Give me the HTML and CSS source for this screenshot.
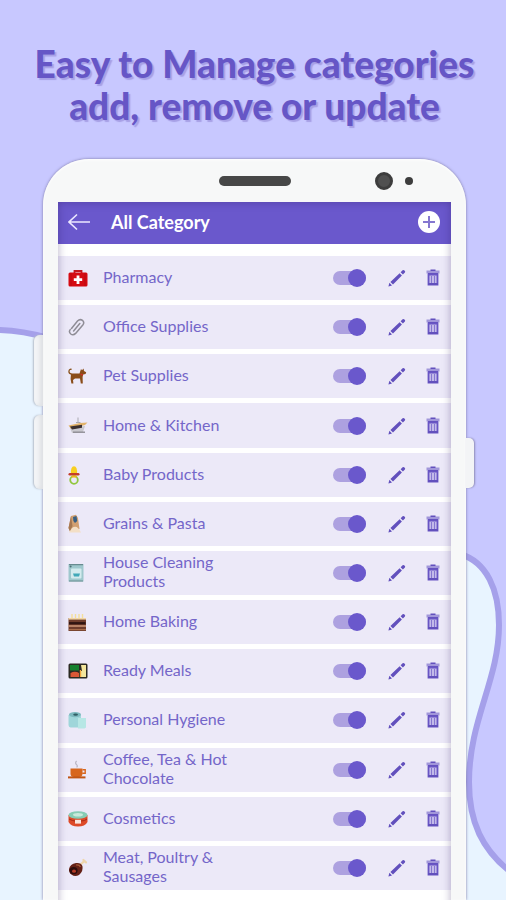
FILE: index.html
```html
<!DOCTYPE html>
<html lang="en">
<head>
    <meta charset="UTF-8">
    <meta name="viewport" content="width=device-width, initial-scale=1.0">
    <title>All Category</title>
    <link rel="stylesheet" href="styles.css">
</head>
<body>
    <!-- Wavy background -->
    <svg class="backdrop" viewBox="0 0 506 900" preserveAspectRatio="none" aria-hidden="true">
        <path d="M-6 330 Q20 330 48 338 L460 554 C487 562 499 590 499 625 C499 680 469 720 469 782 C469 822 482 850 512 873 V910 H-6 Z" fill="#e8f4ff" stroke="#a5a0ea" stroke-width="6"/>
    </svg>

    <!-- Shared icons -->
    <svg class="sprite" aria-hidden="true">
        <symbol id="pencil" viewBox="0 0 20 20">
            <path d="M1.4 18.4 L2.4 14.8 L5 17.4 Z M3.4 14 L12.6 5.2 L14.9 7.5 L6 16.6 Z M13.6 4.2 L15.6 2.2 Q16.4 1.6 17.1 2.3 L17.9 3.1 Q18.5 3.9 17.9 4.6 L15.9 6.5 Z" fill="#6250bd"/>
        </symbol>
        <symbol id="trash" viewBox="0 0 16 20">
            <path d="M1.5 2.5 H14.5 V5.5 H1.5 Z" fill="#a196da"/>
            <path d="M5.5 1.5 H10.5 V3 H5.5 Z M3 5 H13 V6.5 H3 Z" fill="#6250bd"/>
            <path d="M3.5 6.5 H12.5 V16.5 H3.5 Z" fill="#c3baea" stroke="#6855c4" stroke-width="1.8"/>
            <path d="M6.5 8 V15 M9.5 8 V15" stroke="#8577d0" stroke-width="1"/>
            <path d="M3 16 H13" stroke="#6250bd" stroke-width="2"/>
        </symbol>
    </svg>

    <h1 class="headline">Easy to Manage categories<br>add, remove or update</h1>

    <div class="phone">
        <div class="bezel">
            <span class="speaker"></span>
            <div class="sensors">
                <span class="camera"></span>
                <span class="sensor"></span>
            </div>
        </div>
        <main class="screen">
            <header class="app-bar">
                <button type="button" class="back-btn" aria-label="Back">
                    <svg width="22" height="18" viewBox="0 0 22 18"><path d="M22 9 H1 M9 1.5 L1 9 L9 16.5" fill="none" stroke="#ece8ff" stroke-width="1.6"/></svg>
                </button>
                <h2>All Category</h2>
                <button type="button" class="add-btn" aria-label="Add category">
                    <svg width="22" height="22" viewBox="0 0 22 22"><circle cx="11" cy="11" r="11" fill="#fff"/><path d="M11 5 V17 M5 11 H17" stroke="#8577d0" stroke-width="2"/></svg>
                </button>
            </header>
            <ul class="category-list">
                <li class="category">
                    <svg class="thumb" viewBox="0 0 20 20"><path d="M6.5 6 V3 H13.5 V6" fill="none" stroke="#c3161c" stroke-width="1.8"/><rect x="0.5" y="4.5" width="19" height="14" rx="1.5" fill="#d50b12"/><path d="M3 5 V18 M17 5 V18" stroke="#b50b12" stroke-width="0.8"/><path d="M10 7.5 V16 M5.8 11.7 H14.2" stroke="#fff" stroke-width="2.8"/></svg>
                    <label for="cat1">Pharmacy</label>
                    <input type="checkbox" id="cat1" class="toggle" checked>
                    <button type="button" aria-label="Edit Pharmacy"><svg class="pencil"><use href="#pencil"/></svg></button>
                    <button type="button" aria-label="Delete Pharmacy"><svg class="trash"><use href="#trash"/></svg></button>
                </li>
                <li class="category">
                    <svg class="thumb" viewBox="0 0 20 20"><path d="M3.5 11.5 L9.5 4 Q12 1.6 14.5 3.4 Q16.8 5.4 14.8 8 L7.6 16.4 Q5.2 18.8 2.8 17 Q0.4 15 2.2 12.6 M5.6 14 L11.8 6.6" fill="none" stroke="#8f8d96" stroke-width="1.5" stroke-linecap="round"/></svg>
                    <label for="cat2">Office Supplies</label>
                    <input type="checkbox" id="cat2" class="toggle" checked>
                    <button type="button" aria-label="Edit Office Supplies"><svg class="pencil"><use href="#pencil"/></svg></button>
                    <button type="button" aria-label="Delete Office Supplies"><svg class="trash"><use href="#trash"/></svg></button>
                </li>
                <li class="category">
                    <svg class="thumb" viewBox="0 0 20 20"><path d="M3.4 8 Q0.6 7.4 1 5 Q1.4 2.8 3.6 3.4" fill="none" stroke="#8a5420" stroke-width="1.3"/><path d="M3 7.5 H11.5 L13 3 L14 4.2 L15.6 2.6 L16 5 L18.2 6.2 L17.6 8 L15.2 8.4 L14.6 11 L14.8 17.5 H12.8 L12 12.4 H7 L5 14 L5.4 17.5 H3.4 L2.6 13 Z" fill="#8a4d1a"/><path d="M12.6 8 L15 9.2" stroke="#d92b2b" stroke-width="1.2"/></svg>
                    <label for="cat3">Pet Supplies</label>
                    <input type="checkbox" id="cat3" class="toggle" checked>
                    <button type="button" aria-label="Edit Pet Supplies"><svg class="pencil"><use href="#pencil"/></svg></button>
                    <button type="button" aria-label="Delete Pet Supplies"><svg class="trash"><use href="#trash"/></svg></button>
                </li>
                <li class="category">
                    <svg class="thumb" viewBox="0 0 20 20"><path d="M10 1.5 V6 M8 6.5 H12.5" stroke="#aaa9b1" stroke-width="1"/><path d="M2 12 L17 10 L15 16 L4 17 Z" fill="#c9c8ce"/><path d="M0.5 9.5 L12 7 L19.5 6.5 L17 9 L3 12.8 Z" fill="#e2b36a"/><path d="M2 10.6 L14 8.8 L14 11.8 L4 13.6 Z" fill="#3b3030"/><path d="M5 16.2 H17" stroke="#87868d" stroke-width="1.3"/></svg>
                    <label for="cat4">Home &amp; Kitchen</label>
                    <input type="checkbox" id="cat4" class="toggle" checked>
                    <button type="button" aria-label="Edit Home &amp; Kitchen"><svg class="pencil"><use href="#pencil"/></svg></button>
                    <button type="button" aria-label="Delete Home &amp; Kitchen"><svg class="trash"><use href="#trash"/></svg></button>
                </li>
                <li class="category">
                    <svg class="thumb" viewBox="0 0 20 20"><circle cx="6" cy="15" r="3.8" fill="none" stroke="#91c73e" stroke-width="1.8"/><path d="M3 9 Q2.4 1.2 6 1.2 Q9.6 1.2 9 9 Z" fill="#f8cf20"/><rect x="0.5" y="8" width="11" height="2.6" rx="1.3" fill="#c43d2a"/><path d="M3.5 10.6 H8.5 V12.5 H3.5 Z" fill="#f2b418"/></svg>
                    <label for="cat5">Baby Products</label>
                    <input type="checkbox" id="cat5" class="toggle" checked>
                    <button type="button" aria-label="Edit Baby Products"><svg class="pencil"><use href="#pencil"/></svg></button>
                    <button type="button" aria-label="Delete Baby Products"><svg class="trash"><use href="#trash"/></svg></button>
                </li>
                <li class="category">
                    <svg class="thumb" viewBox="0 0 20 20"><path d="M3 2 L8 0.8 L10 4 L11.5 15 L2 17.5 L0.5 14 Z" fill="#d1a071"/><path d="M0.5 14 L3 2 L4.5 12 L2 17.5 Z" fill="#a67851"/><path d="M5 3 L8.5 2 L9.2 7 L7 9 L5.4 7 Z" fill="#375f83"/><path d="M4 14 Q9 10 13 18.5 H1 Z" fill="#f3dfc6"/></svg>
                    <label for="cat6">Grains &amp; Pasta</label>
                    <input type="checkbox" id="cat6" class="toggle" checked>
                    <button type="button" aria-label="Edit Grains &amp; Pasta"><svg class="pencil"><use href="#pencil"/></svg></button>
                    <button type="button" aria-label="Delete Grains &amp; Pasta"><svg class="trash"><use href="#trash"/></svg></button>
                </li>
                <li class="category">
                    <svg class="thumb" viewBox="0 0 20 20"><rect x="0.5" y="1" width="15" height="17.5" fill="#9fc8cd"/><path d="M1 1.6 H15 M1 18 H15" stroke="#688b90" stroke-width="1.2"/><circle cx="2.6" cy="3.6" r="1" fill="#4d7075"/><rect x="3" y="5.5" width="10.5" height="10" rx="1" fill="#d3ebee"/><path d="M5 10.5 H12 L11 13.5 H6 Z" fill="#41a9b8"/></svg>
                    <label for="cat7">House Cleaning Products</label>
                    <input type="checkbox" id="cat7" class="toggle" checked>
                    <button type="button" aria-label="Edit House Cleaning Products"><svg class="pencil"><use href="#pencil"/></svg></button>
                    <button type="button" aria-label="Delete House Cleaning Products"><svg class="trash"><use href="#trash"/></svg></button>
                </li>
                <li class="category">
                    <svg class="thumb" viewBox="0 0 20 20"><path d="M4 2 V6 M7.5 2 V6 M11 2 V6 M14.5 2 V6" stroke="#f5df9b" stroke-width="1.4"/><rect x="0.5" y="6" width="17.5" height="13" fill="#6f3d2c"/><path d="M0.5 6.8 H18" stroke="#f1d5a4" stroke-width="1.6"/><path d="M1 11.2 H17.5" stroke="#2f1512" stroke-width="2.2"/><path d="M0.5 14 H18" stroke="#dda786" stroke-width="1.3"/><path d="M1 17.6 H18" stroke="#a76c4b" stroke-width="1.2"/></svg>
                    <label for="cat8">Home Baking</label>
                    <input type="checkbox" id="cat8" class="toggle" checked>
                    <button type="button" aria-label="Edit Home Baking"><svg class="pencil"><use href="#pencil"/></svg></button>
                    <button type="button" aria-label="Delete Home Baking"><svg class="trash"><use href="#trash"/></svg></button>
                </li>
                <li class="category">
                    <svg class="thumb" viewBox="0 0 20 20"><rect x="0.5" y="2.5" width="19" height="15" rx="1.5" fill="#2b2a22"/><path d="M2 4 H11 V9.5 H2 Z" fill="#16802e"/><path d="M2.5 12 Q7 9.5 11 12 V16 H2.5 Z" fill="#d95836"/><path d="M13 4 H18 V16 H12.5 V10 H14 Z" fill="#f3e69c"/><path d="M12.5 9 V16" stroke="#f3a73d" stroke-width="1.4"/></svg>
                    <label for="cat9">Ready Meals</label>
                    <input type="checkbox" id="cat9" class="toggle" checked>
                    <button type="button" aria-label="Edit Ready Meals"><svg class="pencil"><use href="#pencil"/></svg></button>
                    <button type="button" aria-label="Delete Ready Meals"><svg class="trash"><use href="#trash"/></svg></button>
                </li>
                <li class="category">
                    <svg class="thumb" viewBox="0 0 20 20"><path d="M0.5 5 H13 V17.5 H2.5 Q0.5 17 0.5 15 Z" fill="#9fd6da"/><ellipse cx="7" cy="4.6" rx="6" ry="2.7" fill="#7db9bf"/><ellipse cx="7.6" cy="4.6" rx="2.4" ry="1.2" fill="#315f65"/><path d="M10 8 H18 V17.5 L16.5 18.5 H10 Z" fill="#b7e7e5"/></svg>
                    <label for="cat10">Personal Hygiene</label>
                    <input type="checkbox" id="cat10" class="toggle" checked>
                    <button type="button" aria-label="Edit Personal Hygiene"><svg class="pencil"><use href="#pencil"/></svg></button>
                    <button type="button" aria-label="Delete Personal Hygiene"><svg class="trash"><use href="#trash"/></svg></button>
                </li>
                <li class="category">
                    <svg class="thumb" viewBox="0 0 20 20"><path d="M8.6 1 Q6.6 3 8.6 4.6 Q10 6 8.6 7.4" fill="none" stroke="#b9b6c4" stroke-width="1.2"/><path d="M2.5 8.5 H14.5 V13.5 Q14.5 17 11 17 H6 Q2.5 17 2.5 13.5 Z" fill="#d7661d"/><path d="M14.5 9.8 H17.2 V13.2 H14.2" fill="none" stroke="#d7661d" stroke-width="1.4"/><path d="M0 17.4 H17.5" stroke="#c15514" stroke-width="2"/></svg>
                    <label for="cat11">Coffee, Tea &amp; Hot Chocolate</label>
                    <input type="checkbox" id="cat11" class="toggle" checked>
                    <button type="button" aria-label="Edit Coffee, Tea &amp; Hot Chocolate"><svg class="pencil"><use href="#pencil"/></svg></button>
                    <button type="button" aria-label="Delete Coffee, Tea &amp; Hot Chocolate"><svg class="trash"><use href="#trash"/></svg></button>
                </li>
                <li class="category">
                    <svg class="thumb" viewBox="0 0 20 20"><path d="M0.5 6 H19.5 V13 Q17 17.6 10 17.6 Q3 17.6 0.5 13 Z" fill="#dd4a28"/><ellipse cx="10" cy="6" rx="9.5" ry="3.8" fill="#86cdb5"/><ellipse cx="10" cy="5.8" rx="5" ry="1.8" fill="#c8eadb"/><path d="M7 10.8 H13 V14.6 H7 Z" fill="#f8e5dd"/><path d="M1 10 Q5 12 7 12 M13 12 Q17 12 19 10" stroke="#a82c15" fill="none"/></svg>
                    <label for="cat12">Cosmetics</label>
                    <input type="checkbox" id="cat12" class="toggle" checked>
                    <button type="button" aria-label="Edit Cosmetics"><svg class="pencil"><use href="#pencil"/></svg></button>
                    <button type="button" aria-label="Delete Cosmetics"><svg class="trash"><use href="#trash"/></svg></button>
                </li>
                <li class="category">
                    <svg class="thumb" viewBox="0 0 20 20"><path d="M12 7 L16 3.4 M15.4 2 L18 4.4" stroke="#eed6ad" stroke-width="2.2" stroke-linecap="round"/><path d="M1 11 Q2 6 8 5 Q13 4.4 14.4 8 Q15.6 13 11 17 Q7 19.4 3.4 16.6 Q0.6 14.4 1 11 Z" fill="#642016"/><ellipse cx="5.6" cy="12.6" rx="4" ry="3.6" fill="#2d0c0b"/><ellipse cx="6" cy="13.2" rx="2" ry="1.6" fill="#b43a25"/><path d="M8 7 Q11.6 6.6 12.4 9" fill="none" stroke="#a75a37" stroke-width="1.2"/></svg>
                    <label for="cat13">Meat, Poultry &amp; Sausages</label>
                    <input type="checkbox" id="cat13" class="toggle" checked>
                    <button type="button" aria-label="Edit Meat, Poultry &amp; Sausages"><svg class="pencil"><use href="#pencil"/></svg></button>
                    <button type="button" aria-label="Delete Meat, Poultry &amp; Sausages"><svg class="trash"><use href="#trash"/></svg></button>
                </li>
            </ul>
        </main>
    </div>
</body>
</html>
```
FILE: styles.css
```css
* {
    box-sizing: border-box;
}
body {
    display: flex;
    flex-direction: column;
    min-height: 100vh;
    margin: 0;
    padding: 43px 40px 0 43px;
    background: #c8c8ff;
    font-family: Lato, 'Open Sans', sans-serif;
    position: relative;
}
button {
    display: flex;
    padding: 0;
    border: none;
    background: none;
    cursor: pointer;
}
.backdrop {
    position: absolute;
    inset: 0;
    width: 100%;
    height: 100%;
    z-index: -1;
}
.sprite {
    position: absolute;
    width: 0;
    height: 0;
}
.headline {
    margin: 0 -20px 32px;
    color: #6656c6;
    font-size: 37px;
    font-weight: 900;
    line-height: 42px;
    text-align: center;
    text-shadow: 2px 2px 1px #a7a0e6;
}

/* Phone body */
.phone {
    flex: 1;
    display: flex;
    flex-direction: column;
    position: relative;
    padding: 0 15px;
    background: #f7f8f8;
    border-radius: 46px 46px 0 0;
    box-shadow: 0 0 3px #77739f, inset 0 1px 3px #ffffff;
}
.phone::before, .phone::after, .bezel::before {
    content: "";
    position: absolute;
    background: #f3f4f6;
}
.phone::before {
    left: -9px;
    top: 176px;
    width: 9px;
    height: 71px;
    border-radius: 6px 0 0 6px;
    box-shadow: -1px 0 2px #b5bdc9, inset -3px 0 4px #dddfe3;
}
.bezel::before {
    left: -9px;
    top: 256px;
    width: 9px;
    height: 74px;
    border-radius: 6px 0 0 6px;
    box-shadow: -1px 0 2px #b5bdc9, inset -3px 0 4px #dddfe3;
}
.phone::after {
    right: -8px;
    top: 279px;
    width: 8px;
    height: 50px;
    border-radius: 0 5px 5px 0;
    box-shadow: 1px 0 2px #8f8cb8;
}
.bezel {
    display: grid;
    grid-template-columns: 1fr 72px 1fr;
    align-items: center;
    height: 43px;
}
.speaker {
    grid-column: 2;
    height: 10px;
    border-radius: 5px;
    background: #474747;
}
.sensors {
    display: flex;
    justify-content: flex-end;
    align-items: center;
    gap: 12px;
    padding-right: 38px;
}
.camera {
    width: 18px;
    height: 18px;
    border: 3px solid #3d3d3d;
    border-radius: 50%;
    background: #505050;
}
.sensor {
    width: 8px;
    height: 8px;
    border-radius: 50%;
    background: #3d3d3d;
}

/* App screen */
.screen {
    flex: 1;
    display: flex;
    flex-direction: column;
    position: relative;
    overflow: hidden;
    background: #ffffff;
}
.screen::after {
    content: "";
    position: absolute;
    inset: 0 0 -12px;
    box-shadow: inset 0 0 9px rgba(40, 20, 90, 0.35);
    pointer-events: none;
}
.app-bar {
    display: flex;
    align-items: center;
    height: 42px;
    padding: 0 11px 2px 10px;
    background: #6a58cc;
    color: #ffffff;
}
.app-bar h2 {
    flex: 1;
    margin: 0 0 0 21px;
    font-size: 18px;
    font-weight: bold;
    line-height: 24px;
}
.category-list {
    flex: 1;
    display: grid;
    grid-auto-rows: 1fr;
    gap: 5px;
    margin: 0;
    padding: 12px 0 10px;
    list-style: none;
}
.category {
    display: flex;
    align-items: center;
    padding: 0 10px;
    background: #ece9f8;
}
.thumb {
    width: 20px;
    height: 20px;
    margin-right: 15px;
}
.category label {
    max-width: 140px;
    margin-right: auto;
    padding-bottom: 3px;
    color: #7466c9;
    font-size: 16px;
    line-height: 19px;
}
.toggle {
    appearance: none;
    display: flex;
    align-items: center;
    justify-content: flex-end;
    width: 33px;
    height: 14px;
    margin: 0 21px 0 0;
    border-radius: 7px;
    background: #ada1e0;
    cursor: pointer;
}
.toggle::before {
    content: "";
    flex: none;
    width: 18px;
    height: 18px;
    border-radius: 50%;
    background: #6a58cc;
}
.toggle:not(:checked) {
    justify-content: flex-start;
}
.pencil {
    width: 20px;
    height: 20px;
    margin-right: 18px;
}
.trash {
    width: 16px;
    height: 20px;
}
```
